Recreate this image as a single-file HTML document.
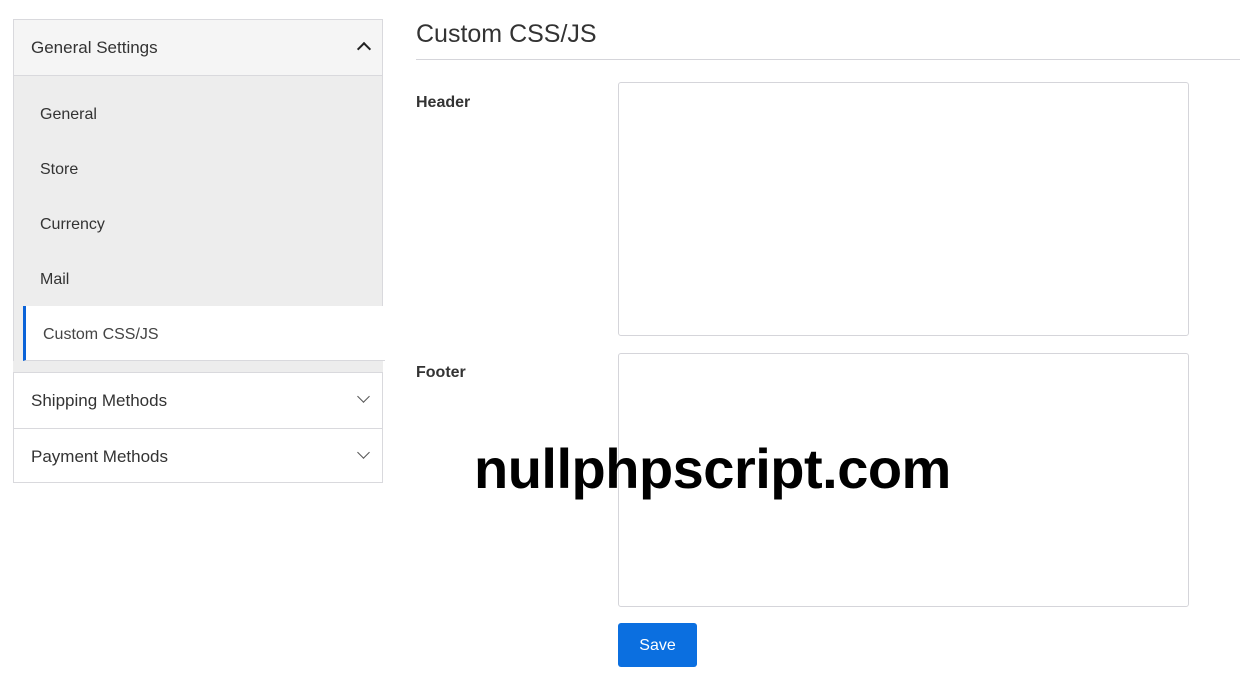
<!DOCTYPE html>
<html><head><style>
body{margin:0;width:1240px;height:687px;background:#fff;font-family:"Liberation Sans",sans-serif;color:#333;position:relative;overflow:hidden}
.abs{position:absolute}
.box{left:13px;width:368px;border:1px solid #d9d9dd}
.chev{position:absolute;right:13px;width:8px;height:8px;border-right:1.6px solid #555;border-bottom:1.6px solid #555}
</style></head><body>
<div class="abs box" style="top:19px;height:55px;background:#f5f5f5;"></div>
<div class="abs" style="left:31px;top:38px;font-size:17px;color:#333">General Settings</div>
<div class="chev" style="left:359px;top:44px;transform:rotate(-135deg);border-color:#222;border-width:2px"></div>
<div class="abs box" style="top:75px;height:230px;background:#ededed;"></div>
<div class="abs" style="left:40px;top:106px;font-size:16px">General</div>
<div class="abs" style="left:40px;top:161px;font-size:16px">Store</div>
<div class="abs" style="left:40px;top:216px;font-size:16px">Currency</div>
<div class="abs" style="left:40px;top:271px;font-size:16px">Mail</div>
<div class="abs" style="left:13px;top:306px;width:10px;height:55px;border-left:1px solid #d9d9dd;background:#ededed"></div>
<div class="abs" style="left:23px;top:306px;width:359px;height:54px;background:#fff;border-left:3px solid #0b63d8;border-bottom:1px solid #d9d9dd"></div>
<div class="abs" style="left:43px;top:326px;font-size:16px;color:#444">Custom CSS/JS</div>
<div class="abs" style="left:13px;top:361px;width:370px;height:11px;background:#ededed"></div>
<div class="abs box" style="top:372px;height:55px"></div>
<div class="abs" style="left:31px;top:391px;font-size:17px">Shipping Methods</div>
<div class="chev" style="left:359px;top:392px;transform:rotate(45deg)"></div>
<div class="abs box" style="top:428px;height:54px;border-top:none"></div>
<div class="abs" style="left:31px;top:447px;font-size:17px">Payment Methods</div>
<div class="chev" style="left:359px;top:448px;transform:rotate(45deg)"></div>

<div class="abs" style="left:416px;top:20px;font-size:25px;color:#333">Custom CSS/JS</div>
<div class="abs" style="left:416px;top:59px;width:824px;height:1px;background:#d5d5da"></div>
<div class="abs" style="left:416px;top:94px;font-size:16px;font-weight:bold">Header</div>
<div class="abs" style="left:618px;top:82px;width:569px;height:252px;border:1px solid #d5d5da;border-radius:3px"></div>
<div class="abs" style="left:416px;top:364px;font-size:16px;font-weight:bold">Footer</div>
<div class="abs" style="left:618px;top:353px;width:569px;height:252px;border:1px solid #d5d5da;border-radius:3px"></div>
<div class="abs" style="left:474px;top:436px;font-size:56px;font-weight:bold;color:#000;letter-spacing:-0.5px">nullphpscript.com</div>
<div class="abs" style="left:618px;top:623px;width:79px;height:44px;background:#0b6fe0;border-radius:3px;color:#fff;font-size:16px;text-align:center;line-height:45px">Save</div>
</body></html>
